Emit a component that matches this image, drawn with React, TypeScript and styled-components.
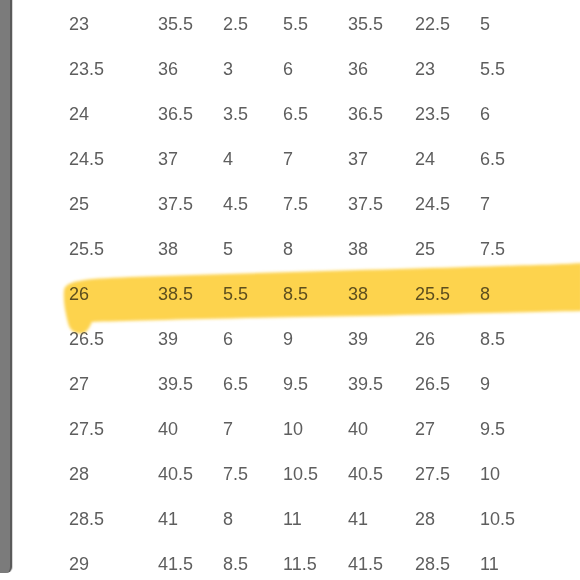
import React from "react";
import styled, { createGlobalStyle } from "styled-components";

const GlobalStyle = createGlobalStyle`
    html, body {
        margin: 0;
        padding: 0;
        background: #ffffff;
    }
`;

const Page = styled.div`
    position: relative;
    display: flex;
    width: 580px;
    height: 580px;
    overflow: hidden;
    background: #ffffff;
`;

const SideBar = styled.div`
    flex: 0 0 10px;
    height: 573px;
    background: #7b7b7b;
    border-right: 2px solid #5a5a5a;
    border-bottom-right-radius: 6px;
    box-shadow: 1px 0 0 #d6d6d6;
`;

const Table = styled.div`
    display: grid;
    grid-template-columns: 89px 65px 60px 65px 67px 65px 1fr;
    grid-auto-rows: 45px;
    padding-left: 57px;
    padding-top: 2px;
    flex: 1;
`;

const Cell = styled.div`
    display: flex;
    align-items: center;
    font-family: "Liberation Sans", Arial, sans-serif;
    font-size: 18px;
    color: #5e5e5e;
    position: relative;
    z-index: 1;
`;

const Marker = styled.svg`
    position: absolute;
    left: 0;
    top: 0;
    width: 580px;
    height: 580px;
    pointer-events: none;
    mix-blend-mode: multiply;
    z-index: 2;
`;

const rows = [
    ["23", "35.5", "2.5", "5.5", "35.5", "22.5", "5"],
    ["23.5", "36", "3", "6", "36", "23", "5.5"],
    ["24", "36.5", "3.5", "6.5", "36.5", "23.5", "6"],
    ["24.5", "37", "4", "7", "37", "24", "6.5"],
    ["25", "37.5", "4.5", "7.5", "37.5", "24.5", "7"],
    ["25.5", "38", "5", "8", "38", "25", "7.5"],
    ["26", "38.5", "5.5", "8.5", "38", "25.5", "8"],
    ["26.5", "39", "6", "9", "39", "26", "8.5"],
    ["27", "39.5", "6.5", "9.5", "39.5", "26.5", "9"],
    ["27.5", "40", "7", "10", "40", "27", "9.5"],
    ["28", "40.5", "7.5", "10.5", "40.5", "27.5", "10"],
    ["28.5", "41", "8", "11", "41", "28", "10.5"],
    ["29", "41.5", "8.5", "11.5", "41.5", "28.5", "11"],
];

export default function App() {
    return (
        <>
            <GlobalStyle />
            <Page>
                <SideBar />
                <Table>
                    {rows.map((r, i) =>
                        r.map((v, j) => <Cell key={i + "-" + j}>{v}</Cell>)
                    )}
                </Table>
                {/* highlighter stroke over the 26 row */}
                <Marker viewBox="0 0 580 580">
                    <defs>
                        <filter id="soft" x="-5%" y="-20%" width="110%" height="140%">
                            <feGaussianBlur stdDeviation="1.6" />
                        </filter>
                    </defs>
                    <path
                        d="M64 290 C66 281 80 279 130 277 C250 273 400 269 500 266 C540 265 570 264 582 263 L582 311 C520 312 420 315 300 317 C200 319 120 321 92 322 C90 326 88 331 84 333 C76 335 70 331 68 323 C65 311 63 300 64 290 Z"
                        fill="#fdd34e"
                        filter="url(#soft)"
                    />
                </Marker>
            </Page>
        </>
    );
}
